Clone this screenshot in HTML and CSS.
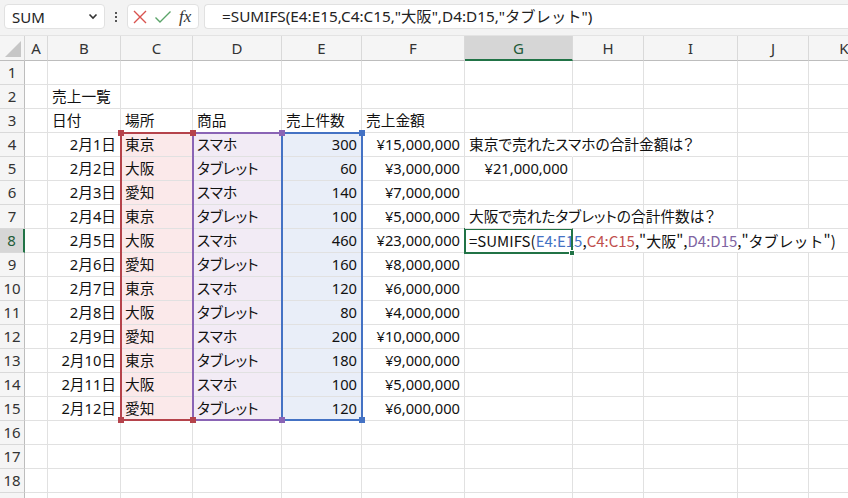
FILE: index.html
```html
<!DOCTYPE html>
<html lang="ja">
<head>
<meta charset="utf-8">
<link rel="stylesheet" href="styles.css">
</head>
<body>
<div class="app">
  <div class="fbar">
    <div class="namebox"><span>SUM</span>
      <svg class="chev" width="10" height="7" viewBox="0 0 10 7"><path d="M1.5 1.5 L5 5 L8.5 1.5" fill="none" stroke="#333" stroke-width="1.6"/></svg>
    </div>
    <div class="dots"><i></i><i></i><i></i></div>
    <div class="fxbox">
      <svg width="16" height="16" viewBox="0 0 16 16"><path d="M2 2 L14 14 M14 2 L2 14" stroke="#d9534f" stroke-width="1.4" fill="none"/></svg>
      <svg width="18" height="16" viewBox="0 0 18 16"><path d="M1.5 8.5 L6 13 L16.5 2.5" stroke="#5aa469" stroke-width="1.4" fill="none"/></svg>
      <span class="fx">fx</span>
    </div>
    <div class="formula">=SUMIFS(E4:E15,C4:C15,"大阪",D4:D15,"タブレット")</div>
  </div>
  <div class="sheet">
    <div class="grid cells">
    <div class="corner"><span class="tri"></span></div>
    <div class="ch">A</div><div class="ch">B</div><div class="ch">C</div><div class="ch">D</div><div class="ch">E</div><div class="ch">F</div><div class="ch sel">G</div><div class="ch">H</div><div class="ch">I</div><div class="ch">J</div><div class="ch">K</div>

    <div class="rh">1</div><div class="c"></div><div class="c"></div><div class="c"></div><div class="c"></div><div class="c"></div><div class="c"></div><div class="c"></div><div class="c"></div><div class="c"></div><div class="c"></div><div class="c"></div>
    <div class="rh">2</div><div class="c"></div><div class="c">売上一覧</div><div class="c"></div><div class="c"></div><div class="c"></div><div class="c"></div><div class="c"></div><div class="c"></div><div class="c"></div><div class="c"></div><div class="c"></div>
    <div class="rh">3</div><div class="c"></div><div class="c">日付</div><div class="c">場所</div><div class="c">商品</div><div class="c">売上件数</div><div class="c">売上金額</div><div class="c"></div><div class="c"></div><div class="c"></div><div class="c"></div><div class="c"></div>
    <div class="rh">4</div><div class="c"></div><div class="c r">2月1日</div><div class="c fc">東京</div><div class="c fd">スマホ</div><div class="c fe r">300</div><div class="c r">¥15,000,000</div><div class="c over">東京で売れたスマホの合計金額は？</div><div class="c"></div><div class="c"></div><div class="c"></div><div class="c"></div>
    <div class="rh">5</div><div class="c"></div><div class="c r">2月2日</div><div class="c fc">大阪</div><div class="c fd">タブレット</div><div class="c fe r">60</div><div class="c r">¥3,000,000</div><div class="c r">¥21,000,000</div><div class="c"></div><div class="c"></div><div class="c"></div><div class="c"></div>
    <div class="rh">6</div><div class="c"></div><div class="c r">2月3日</div><div class="c fc">愛知</div><div class="c fd">スマホ</div><div class="c fe r">140</div><div class="c r">¥7,000,000</div><div class="c"></div><div class="c"></div><div class="c"></div><div class="c"></div><div class="c"></div>
    <div class="rh">7</div><div class="c"></div><div class="c r">2月4日</div><div class="c fc">東京</div><div class="c fd">タブレット</div><div class="c fe r">100</div><div class="c r">¥5,000,000</div><div class="c over">大阪で売れたタブレットの合計件数は？</div><div class="c"></div><div class="c"></div><div class="c"></div><div class="c"></div>
    <div class="rh selr">8</div><div class="c"></div><div class="c r">2月5日</div><div class="c fc">大阪</div><div class="c fd">スマホ</div><div class="c fe r">460</div><div class="c r">¥23,000,000</div><div class="c"></div><div class="c"></div><div class="c"></div><div class="c"></div><div class="c"></div>
    <div class="rh">9</div><div class="c"></div><div class="c r">2月6日</div><div class="c fc">愛知</div><div class="c fd">タブレット</div><div class="c fe r">160</div><div class="c r">¥8,000,000</div><div class="c"></div><div class="c"></div><div class="c"></div><div class="c"></div><div class="c"></div>
    <div class="rh">10</div><div class="c"></div><div class="c r">2月7日</div><div class="c fc">東京</div><div class="c fd">スマホ</div><div class="c fe r">120</div><div class="c r">¥6,000,000</div><div class="c"></div><div class="c"></div><div class="c"></div><div class="c"></div><div class="c"></div>
    <div class="rh">11</div><div class="c"></div><div class="c r">2月8日</div><div class="c fc">大阪</div><div class="c fd">タブレット</div><div class="c fe r">80</div><div class="c r">¥4,000,000</div><div class="c"></div><div class="c"></div><div class="c"></div><div class="c"></div><div class="c"></div>
    <div class="rh">12</div><div class="c"></div><div class="c r">2月9日</div><div class="c fc">愛知</div><div class="c fd">スマホ</div><div class="c fe r">200</div><div class="c r">¥10,000,000</div><div class="c"></div><div class="c"></div><div class="c"></div><div class="c"></div><div class="c"></div>
    <div class="rh">13</div><div class="c"></div><div class="c r">2月10日</div><div class="c fc">東京</div><div class="c fd">タブレット</div><div class="c fe r">180</div><div class="c r">¥9,000,000</div><div class="c"></div><div class="c"></div><div class="c"></div><div class="c"></div><div class="c"></div>
    <div class="rh">14</div><div class="c"></div><div class="c r">2月11日</div><div class="c fc">大阪</div><div class="c fd">スマホ</div><div class="c fe r">100</div><div class="c r">¥5,000,000</div><div class="c"></div><div class="c"></div><div class="c"></div><div class="c"></div><div class="c"></div>
    <div class="rh">15</div><div class="c"></div><div class="c r">2月12日</div><div class="c fc">愛知</div><div class="c fd">タブレット</div><div class="c fe r">120</div><div class="c r">¥6,000,000</div><div class="c"></div><div class="c"></div><div class="c"></div><div class="c"></div><div class="c"></div>
    <div class="rh">16</div><div class="c"></div><div class="c"></div><div class="c"></div><div class="c"></div><div class="c"></div><div class="c"></div><div class="c"></div><div class="c"></div><div class="c"></div><div class="c"></div><div class="c"></div>
    <div class="rh">17</div><div class="c"></div><div class="c"></div><div class="c"></div><div class="c"></div><div class="c"></div><div class="c"></div><div class="c"></div><div class="c"></div><div class="c"></div><div class="c"></div><div class="c"></div>
    <div class="rh">18</div><div class="c"></div><div class="c"></div><div class="c"></div><div class="c"></div><div class="c"></div><div class="c"></div><div class="c"></div><div class="c"></div><div class="c"></div><div class="c"></div><div class="c"></div>
    <div class="rh">19</div><div class="c"></div><div class="c"></div><div class="c"></div><div class="c"></div><div class="c"></div><div class="c"></div><div class="c"></div><div class="c"></div><div class="c"></div><div class="c"></div><div class="c"></div>
    </div>

    <div class="grid overlay">
      <div class="rng rc"><i class="h tl"></i><i class="h tr"></i><i class="h bl"></i><i class="h br"></i></div>
      <div class="rng rd"><i class="h tr"></i><i class="h br"></i></div>
      <div class="rng re"><i class="h tr"></i><i class="h br"></i></div>
      <div class="edit">=SUMIFS(<span class="b">E4:E15</span>,<span class="red">C4:C15</span>,"大阪",<span class="p">D4:D15</span>,"タブレット")<span class="caret"></span></div>
      <div class="active"><i class="handle"></i></div>
    </div>
  </div>
</div>
</body>
</html>
```
FILE: styles.css
```css
* { box-sizing: border-box; }
html, body { margin: 0; padding: 0; background: #fff; }
body { width: 848px; height: 498px; overflow: hidden; font-family: "Noto Sans", "Noto Sans CJK JP", sans-serif; }
.app { width: 848px; height: 498px; overflow: hidden; display: flex; flex-direction: column; }

.fbar { height: 36px; flex: none; background: #f3f3f3; display: flex; align-items: flex-start; padding: 4px 0 0 4px; border-bottom: 1px solid #e3e3e3; }
.namebox { width: 101px; height: 25px; background: #fff; border: 1px solid #e1e1e1; border-radius: 4px; display: flex; align-items: center; justify-content: space-between; padding: 0 6px 0 7px; font-family: "Noto Sans", sans-serif; font-size: 15px; color: #222; }
.dots { width: 22px; height: 25px; display: flex; flex-direction: column; align-items: center; justify-content: center; gap: 2px; }
.dots i { width: 2px; height: 2px; background: #555; display: block; }
.fxbox { width: 72px; height: 25px; background: #fff; border: 1px solid #e1e1e1; border-radius: 4px; display: flex; align-items: center; padding-left: 4px; gap: 6px; }
.fx { font-family: "Liberation Serif", serif; font-style: italic; font-size: 17px; color: #333; margin-left: 1px; line-height: 1; }
.formula { flex: 1; height: 25px; margin-left: 5px; background: #fff; border: 1px solid #e1e1e1; border-right: none; border-radius: 4px 0 0 4px; padding-left: 17px; font-family: "Noto Sans", "Noto Sans CJK JP", sans-serif; font-size: 15.3px; line-height: 23px; color: #222; white-space: nowrap; }

.sheet { position: relative; flex: 1; }
.grid { display: grid; grid-template-columns: 25px 23px 73px 72px 89px 80px 103px 108px 71px 94px 71px 71px; grid-template-rows: 25px repeat(19, 24px); font-size: 14.7px; color: #111; font-family: "Noto Sans", "Noto Sans CJK JP", sans-serif; font-feature-settings: "palt"; }
.overlay { position: absolute; left: 0; top: 0; right: 0; bottom: 0; pointer-events: none; }
.corner { background: #f5f5f5; border-right: 1px solid #d4d4d4; border-bottom: 1px solid #bdbdbd; position: relative; }
.tri { position: absolute; right: 3px; bottom: 3px; width: 0; height: 0; border-left: 16px solid transparent; border-bottom: 16px solid #c6c6c6; }
.ch { background: #f5f5f5; border-right: 1px solid #d9d9d9; border-bottom: 1px solid #bdbdbd; text-align: center; font-family: "Noto Sans", sans-serif; font-size: 15px; line-height: 24px; color: #333; }
.ch.sel { background: #d6d6d6; color: #1e5b38; border-bottom: 2px solid #217346; }
.rh { background: #f5f5f5; border-right: 1px solid #bdbdbd; border-bottom: 1px solid #d9d9d9; text-align: center; font-family: "Noto Sans", sans-serif; font-size: 15px; line-height: 23px; color: #333; }
.rh.selr { background: #d6d6d6; color: #1e5b38; border-right: 2px solid #217346; }
.c { border-right: 1px solid #e1e1e1; border-bottom: 1px solid #e1e1e1; padding: 0 4px; line-height: 23px; white-space: nowrap; overflow: visible; }
.c.r { text-align: right; }
.c.over { border-right-color: transparent; position: relative; z-index: 1; }
.fc { background: #fbe9ea; }
.fd { background: #f2ebf5; }
.fe { background: #e9eef8; }

.rng { grid-row: 5 / 17; border: 2px solid; margin: -1px -1px 0 -1px; position: relative; }
.rc { grid-column: 4; border-color: #b5434b; }
.rd { grid-column: 5; border-color: #8a64b5; }
.re { grid-column: 6; border-color: #4472c4; }
.h { position: absolute; width: 6px; height: 6px; display: block; z-index: 2; }
.rc .h { background: #b5434b; }
.rd .h { background: #8a64b5; }
.re .h { background: #4472c4; }
.tl { left: -4px; top: -4px; }
.tr { right: -4px; top: -4px; }
.bl { left: -4px; bottom: -4px; }
.br { right: -4px; bottom: -4px; }

.edit { grid-column: 8 / 12; grid-row: 9; background: #fff; margin: 0 0 1px 0; padding: 0 4px; line-height: 23px; white-space: nowrap; font-family: "Noto Sans CJK JP", sans-serif; font-feature-settings: normal; font-size: 15px; color: #111; display: flex; align-items: center; }
.edit .b { color: #4472c4; }
.edit .red { color: #c0504d; }
.edit .p { color: #8064a2; }
.caret { display: inline-block; width: 1px; height: 18px; background: #000; margin-left: 3px; }
.active { grid-column: 8; grid-row: 9; border: 2px solid #217346; margin: -1px 0 -1px -1px; position: relative; }
.handle { position: absolute; right: -4px; bottom: -4px; width: 6px; height: 6px; background: #217346; border: 1px solid #fff; display: block; }
```
